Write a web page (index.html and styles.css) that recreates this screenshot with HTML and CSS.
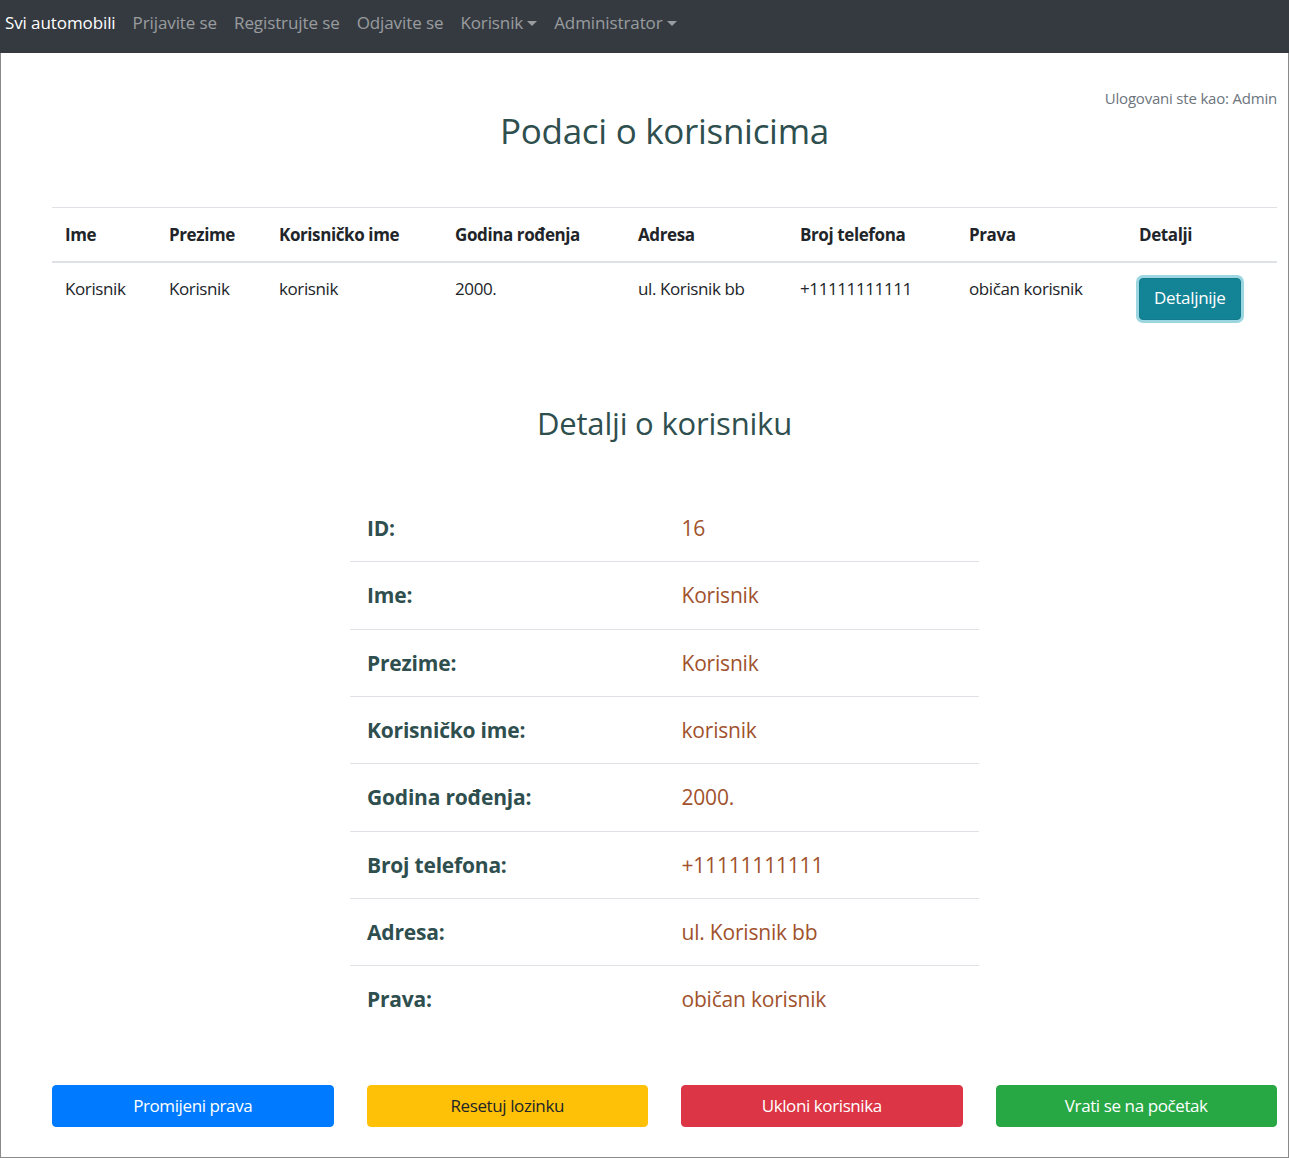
FILE: index.html
```html
<!DOCTYPE html>
<html lang="sr">
<head>
<meta charset="utf-8">
<title>Podaci o korisnicima</title>
<link rel="stylesheet" href="styles.css">
</head>
<body>
<nav class="navbar">
  <a class="nav-link active" href="#">Svi automobili</a>
  <a class="nav-link" href="#">Prijavite se</a>
  <a class="nav-link" href="#">Registrujte se</a>
  <a class="nav-link" href="#">Odjavite se</a>
  <a class="nav-link dropdown" href="#">Korisnik<span class="caret"></span></a>
  <a class="nav-link dropdown" href="#">Administrator<span class="caret"></span></a>
</nav>
<main class="page">
  <div class="user-line">Ulogovani ste kao: Admin</div>
  <div class="content">
    <h1 class="title">Podaci o korisnicima</h1>
    <table class="users">
      <thead>
        <tr>
          <th class="c1">Ime</th>
          <th class="c2">Prezime</th>
          <th class="c3">Korisničko ime</th>
          <th class="c4">Godina rođenja</th>
          <th class="c5">Adresa</th>
          <th class="c6">Broj telefona</th>
          <th class="c7">Prava</th>
          <th class="c8">Detalji</th>
        </tr>
      </thead>
      <tbody>
        <tr>
          <td>Korisnik</td>
          <td>Korisnik</td>
          <td>korisnik</td>
          <td>2000.</td>
          <td>ul. Korisnik bb</td>
          <td>+11111111111</td>
          <td>običan korisnik</td>
          <td><button class="btn-info" type="button">Detaljnije</button></td>
        </tr>
      </tbody>
    </table>

    <h2 class="subtitle">Detalji o korisniku</h2>
    <table class="details">
      <tbody>
        <tr><th>ID:</th><td>16</td></tr>
        <tr><th>Ime:</th><td>Korisnik</td></tr>
        <tr><th>Prezime:</th><td>Korisnik</td></tr>
        <tr><th>Korisničko ime:</th><td>korisnik</td></tr>
        <tr><th>Godina rođenja:</th><td>2000.</td></tr>
        <tr><th>Broj telefona:</th><td>+11111111111</td></tr>
        <tr><th>Adresa:</th><td>ul. Korisnik bb</td></tr>
        <tr><th>Prava:</th><td>običan korisnik</td></tr>
      </tbody>
    </table>

    <div class="actions">
      <button class="btn btn-primary" type="button">Promijeni prava</button>
      <button class="btn btn-warning" type="button">Resetuj lozinku</button>
      <button class="btn btn-danger" type="button">Ukloni korisnika</button>
      <button class="btn btn-success" type="button">Vrati se na početak</button>
    </div>
  </div>
</main>
</body>
</html>
```

FILE: styles.css
```css
* { box-sizing: border-box; }

html, body {
  margin: 0;
  padding: 0;
  background: #fff;
}

body {
  font-family: "Segoe UI", "Open Sans", "Noto Sans", sans-serif;
  color: #212529;
  width: 1289px;
}

.navbar {
  height: 53px;
  background: #343a40;
  display: flex;
  align-items: center;
  gap: 17px;
  padding: 0 0 8px 5px;
}

.nav-link {
  color: rgba(255, 255, 255, 0.5);
  text-decoration: none;
  font-size: 17px;
  line-height: 26px;
  letter-spacing: -0.1px;
  display: flex;
  align-items: center;
}

.nav-link.active {
  color: #fff;
}

.caret {
  display: inline-block;
  width: 0;
  height: 0;
  margin-left: 4px;
  margin-top: 1px;
  border-top: 5px solid currentColor;
  border-left: 5px solid transparent;
  border-right: 5px solid transparent;
}

.page {
  border: 1px solid #8a8a8a;
  border-top: none;
  padding: 34px 11px 29px 51px;
  min-height: 1105px;
}

.user-line {
  text-align: right;
  font-size: 15px;
  line-height: 22px;
  color: #6c757d;
  letter-spacing: -0.2px;
}

.content {
  display: flex;
  flex-direction: column;
}

.title {
  margin: 0;
  text-align: center;
  font-size: 35px;
  line-height: 44px;
  font-weight: 500;
  color: #2f4f4f;
  letter-spacing: -0.3px;
}

.users {
  margin-top: 54px;
  width: 100%;
  border-collapse: collapse;
  table-layout: fixed;
  font-size: 17px;
  letter-spacing: -0.4px;
}

.users th,
.users td {
  text-align: left;
  vertical-align: top;
  padding: 13px 12px 12px 13px;
  line-height: 28px;
  white-space: nowrap;
}

.users thead th {
  border-top: 1px solid #dee2e6;
  border-bottom: 2px solid #dee2e6;
  font-weight: 700;
  color: #212529;
}

.users tbody td {
  padding-top: 12px;
  padding-bottom: 14px;
}

.c1 { width: 104px; }
.c2 { width: 110px; }
.c3 { width: 176px; }
.c4 { width: 183px; }
.c5 { width: 162px; }
.c6 { width: 169px; }
.c7 { width: 170px; }
.c8 { width: 151px; }

.btn-info {
  font-family: inherit;
  margin-top: 3px;
  font-size: 17px;
  letter-spacing: -0.3px;
  line-height: 26px;
  padding: 6px 14px 8px;
  color: #fff;
  background: #138496;
  border: 1px solid #117a8b;
  border-radius: 4px;
  box-shadow: 0 0 0 3px rgba(58, 176, 195, 0.5);
}

.subtitle {
  margin: 71px 0 0;
  text-align: center;
  font-size: 31px;
  line-height: 36px;
  font-weight: 500;
  color: #2f4f4f;
  letter-spacing: -0.2px;
}

.details {
  margin: 54px auto 0;
  width: 629px;
  border-collapse: collapse;
  table-layout: fixed;
  font-size: 21px;
  letter-spacing: -0.2px;
}

.details th,
.details td {
  width: 50%;
  text-align: left;
  padding: 20px 17px 20.35px;
  line-height: 26px;
}

.details tr + tr th,
.details tr + tr td {
  border-top: 1px solid #dee2e6;
}

.details th {
  font-weight: 700;
  color: #2f4f4f;
}

.details td {
  color: #a0522d;
}

.actions {
  margin-top: 52px;
  display: grid;
  grid-template-columns: repeat(4, 1fr);
  gap: 33px;
}

.btn {
  font-family: inherit;
  height: 42px;
  font-size: 17px;
  letter-spacing: -0.4px;
  border: 1px solid transparent;
  border-radius: 4px;
  color: #fff;
  padding: 0 12px;
}

.btn-primary { background: #007bff; border-color: #007bff; }
.btn-warning { background: #ffc107; border-color: #ffc107; color: #212529; }
.btn-danger { background: #dc3545; border-color: #dc3545; }
.btn-success { background: #28a745; border-color: #28a745; }
```
